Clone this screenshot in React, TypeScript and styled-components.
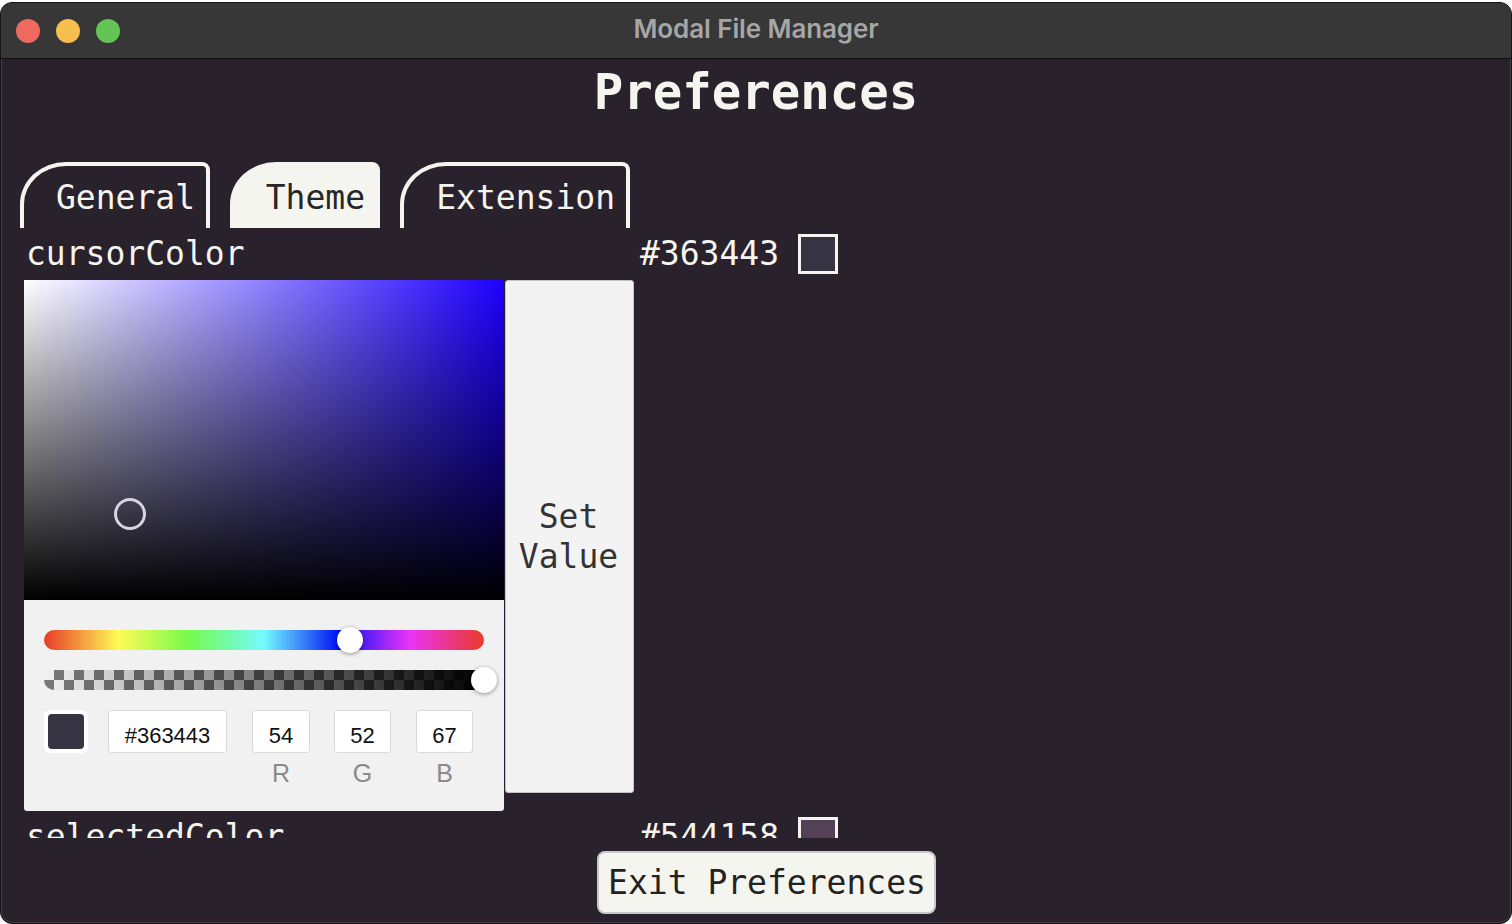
import React from "react";
import styled, { createGlobalStyle } from "styled-components";

const MONO = `"DejaVu Sans Mono", "Liberation Mono", monospace`;
const SANS = `"Liberation Sans", Arial, sans-serif`;
const BG = "#29212b";
const OFFWHITE = "#f5f5ef";

const Global = createGlobalStyle`
  html, body { margin: 0; padding: 0; background: #ffffff; overflow: hidden; }
  #root { width: 1512px; height: 924px; }
`;

const Window = styled.div`
  box-sizing: border-box;
  margin-top: 2px;
  width: 1512px;
  height: 922px;
  border-radius: 12px;
  border: 1px solid #151515;
  box-shadow: inset 0 0 0 1px rgba(255, 255, 255, 0.12);
  overflow: hidden;
  background: ${BG};
  display: flex;
  flex-direction: column;
`;

const TitleBar = styled.div`
  flex: 0 0 auto;
  height: 55px;
  background: #383737;
  border-bottom: 1px solid #0e0e0e;
  display: grid;
  grid-template-columns: 1fr auto 1fr;
  align-items: center;
`;

const Lights = styled.div`
  display: flex;
  gap: 16px;
  padding-left: 15px;
`;

const Light = styled.span<{ $color: string }>`
  width: 24px;
  height: 24px;
  border-radius: 50%;
  background: ${(p) => p.$color};
`;

const WindowTitle = styled.div`
  font-family: "Inter", ${SANS};
  font-weight: 600;
  font-size: 26px;
  letter-spacing: -0.1px;
  line-height: 30px;
  margin-top: -3px;
  color: #a6a6a6;
`;

const Content = styled.div`
  flex: 1 1 auto;
  display: flex;
  flex-direction: column;
  min-height: 0;
`;

const Heading = styled.h1`
  margin: 6px 0 0;
  text-align: center;
  font-family: ${MONO};
  font-weight: 700;
  font-size: 49px;
  line-height: 56px;
  color: ${OFFWHITE};
`;

const TabBar = styled.div`
  display: flex;
  gap: 20px;
  padding-left: 19px;
  margin-top: 41px;
`;

const Tab = styled.div<{ $active?: boolean; $width: number }>`
  box-sizing: border-box;
  height: 66px;
  width: ${(p) => p.$width}px;
  border: 4px solid ${OFFWHITE};
  border-bottom: none;
  border-radius: 46px 8px 0 0 / 42px 8px 0 0;
  background: ${(p) => (p.$active ? OFFWHITE : "transparent")};
  color: ${(p) => (p.$active ? "#262626" : OFFWHITE)};
  font-family: ${MONO};
  font-size: 33px;
  line-height: 40px;
  padding: 12px 11px 0 0;
  text-align: right;
`;

const List = styled.div`
  margin-top: 6px;
  height: 604px;
  overflow: hidden;
  padding-left: 23px;
  display: flex;
  flex-direction: column;
  gap: 6px;
`;

const Row = styled.div`
  display: grid;
  grid-template-columns: 616px auto;
  row-gap: 6px;
  align-items: start;
`;

const Label = styled.div`
  font-family: ${MONO};
  font-size: 33px;
  line-height: 40px;
  color: ${OFFWHITE};
  padding-left: 2px;
`;

const Value = styled.div`
  display: flex;
  align-items: center;
  gap: 19px;
  font-family: ${MONO};
  font-size: 33px;
  line-height: 40px;
  color: ${OFFWHITE};
`;

const Swatch = styled.span<{ $color: string }>`
  box-sizing: border-box;
  width: 40px;
  height: 40px;
  border: 3px solid ${OFFWHITE};
  background: ${(p) => p.$color};
`;

const EditorRow = styled.div`
  grid-column: 1 / 2;
  display: flex;
  align-items: flex-start;
  gap: 1px;
`;

const Picker = styled.div`
  width: 480px;
  background: #f1f1f1;
  border-radius: 0 0 3px 3px;
  overflow: hidden;
`;

const Saturation = styled.div<{ $hue: number }>`
  position: relative;
  height: 320px;
  background: linear-gradient(to top, #000, rgba(0, 0, 0, 0)),
    linear-gradient(to right, #fff, rgba(255, 255, 255, 0)),
    hsl(${(p) => p.$hue}, 100%, 50%);
`;

const SatPointer = styled.span`
  position: absolute;
  width: 26px;
  height: 26px;
  margin: -16px 0 0 -16px;
  border: 3px solid #d6d4dc;
  border-radius: 50%;
`;

const Controls = styled.div`
  padding: 30px 20px 24px;
  display: flex;
  flex-direction: column;
  gap: 20px;
`;

const Bar = styled.div`
  position: relative;
  height: 20px;
  border-radius: 10px;
`;

const HueBar = styled(Bar)`
  background: linear-gradient(
    to right,
    #ea3b28 0%,
    #fdfc55 17%,
    #75fa4c 33%,
    #74fbfd 50%,
    #0010f5 67%,
    #ea33f7 83%,
    #ea3b28 100%
  );
`;

const AlphaBar = styled(Bar)`
  background: linear-gradient(to right, rgba(0, 0, 0, 0), #000),
    repeating-conic-gradient(#7a7a7a 0 25%, #f2f2f2 0 50%) 0 0 / 20px 20px;
`;

const Thumb = styled.span`
  position: absolute;
  top: 50%;
  width: 26px;
  height: 26px;
  margin: -13px 0 0 -13px;
  border-radius: 50%;
  background: #fff;
  box-shadow: 0 1px 4px rgba(0, 0, 0, 0.4);
`;

const Inputs = styled.div`
  display: flex;
  align-items: flex-start;
`;

const PreviewBox = styled.div`
  box-sizing: border-box;
  width: 44px;
  height: 43px;
  padding: 4px;
  background: #fff;
  border-radius: 6px;
  display: flex;
`;

const PreviewFill = styled.span<{ $color: string }>`
  flex: 1;
  border-radius: 4px;
  background: ${(p) => p.$color};
`;

const Field = styled.div<{ $ml: number; $w: number }>`
  margin-left: ${(p) => p.$ml}px;
  width: ${(p) => p.$w}px;
  display: flex;
  flex-direction: column;
  align-items: center;
  gap: 6px;
`;

const InputBox = styled.div`
  box-sizing: border-box;
  width: 100%;
  height: 43px;
  background: #fff;
  border: 1px solid #dadada;
  border-radius: 3px;
  font-family: ${SANS};
  font-size: 22px;
  color: #111;
  display: flex;
  align-items: center;
  justify-content: center;
  padding-top: 9px;
`;

const InputLabel = styled.span`
  font-family: ${SANS};
  font-size: 25px;
  line-height: 28px;
  color: #8a8a8a;
`;

const SetButton = styled.button`
  box-sizing: border-box;
  width: 129px;
  height: 513px;
  background: #f3f3f3;
  border: 1px solid #c4c4c4;
  border-radius: 3px;
  font-family: ${MONO};
  font-size: 33px;
  line-height: 40px;
  color: #333;
  padding: 0 6px 0 4px;
  cursor: pointer;
`;

const Footer = styled.div`
  display: flex;
  justify-content: center;
  padding: 13px 0 0 20px;
`;

const ExitButton = styled.button`
  box-sizing: border-box;
  width: 339px;
  height: 63px;
  background: ${OFFWHITE};
  border: 2px solid #c8c8c8;
  border-radius: 8px;
  font-family: ${MONO};
  font-size: 33px;
  color: #222;
  padding: 0 0 0 2px;
  cursor: pointer;
`;

const hexColor = "#363443";
const hue = 247;
const sat = 0.22;
const val = 0.27;

export default function App() {
  return (
    <>
      <Global />
      <Window>
        <TitleBar>
          <Lights>
            <Light $color="#ee6a5f" />
            <Light $color="#f5be4f" />
            <Light $color="#62c554" />
          </Lights>
          <WindowTitle>Modal File Manager</WindowTitle>
          <div />
        </TitleBar>
        <Content>
          <Heading>Preferences</Heading>
          <TabBar>
            <Tab $width={190}>General</Tab>
            <Tab $width={150} $active>
              Theme
            </Tab>
            <Tab $width={230}>Extension</Tab>
          </TabBar>
          <List>
            <Row>
              <Label>cursorColor</Label>
              <Value>
                {hexColor}
                <Swatch $color={hexColor} />
              </Value>
              <EditorRow>
                <Picker>
                  <Saturation $hue={hue}>
                    <SatPointer style={{ left: `${sat * 100}%`, top: `${(1 - val) * 100}%` }} />
                  </Saturation>
                  <Controls>
                    <HueBar>
                      <Thumb style={{ left: `${(250 / 360) * 100}%` }} />
                    </HueBar>
                    <AlphaBar>
                      <Thumb style={{ left: "100%" }} />
                    </AlphaBar>
                    <Inputs>
                      <PreviewBox>
                        <PreviewFill $color={hexColor} />
                      </PreviewBox>
                      <Field $ml={20} $w={119}>
                        <InputBox>{hexColor}</InputBox>
                      </Field>
                      <Field $ml={25} $w={58}>
                        <InputBox>54</InputBox>
                        <InputLabel>R</InputLabel>
                      </Field>
                      <Field $ml={24} $w={57}>
                        <InputBox>52</InputBox>
                        <InputLabel>G</InputLabel>
                      </Field>
                      <Field $ml={25} $w={57}>
                        <InputBox>67</InputBox>
                        <InputLabel>B</InputLabel>
                      </Field>
                    </Inputs>
                  </Controls>
                </Picker>
                <SetButton>
                  Set
                  <br />
                  Value
                </SetButton>
              </EditorRow>
            </Row>
            <Row>
              <Label>selectedColor</Label>
              <Value>
                #544158
                <Swatch $color="#544158" />
              </Value>
            </Row>
          </List>
          <Footer>
            <ExitButton>Exit Preferences</ExitButton>
          </Footer>
        </Content>
      </Window>
    </>
  );
}
